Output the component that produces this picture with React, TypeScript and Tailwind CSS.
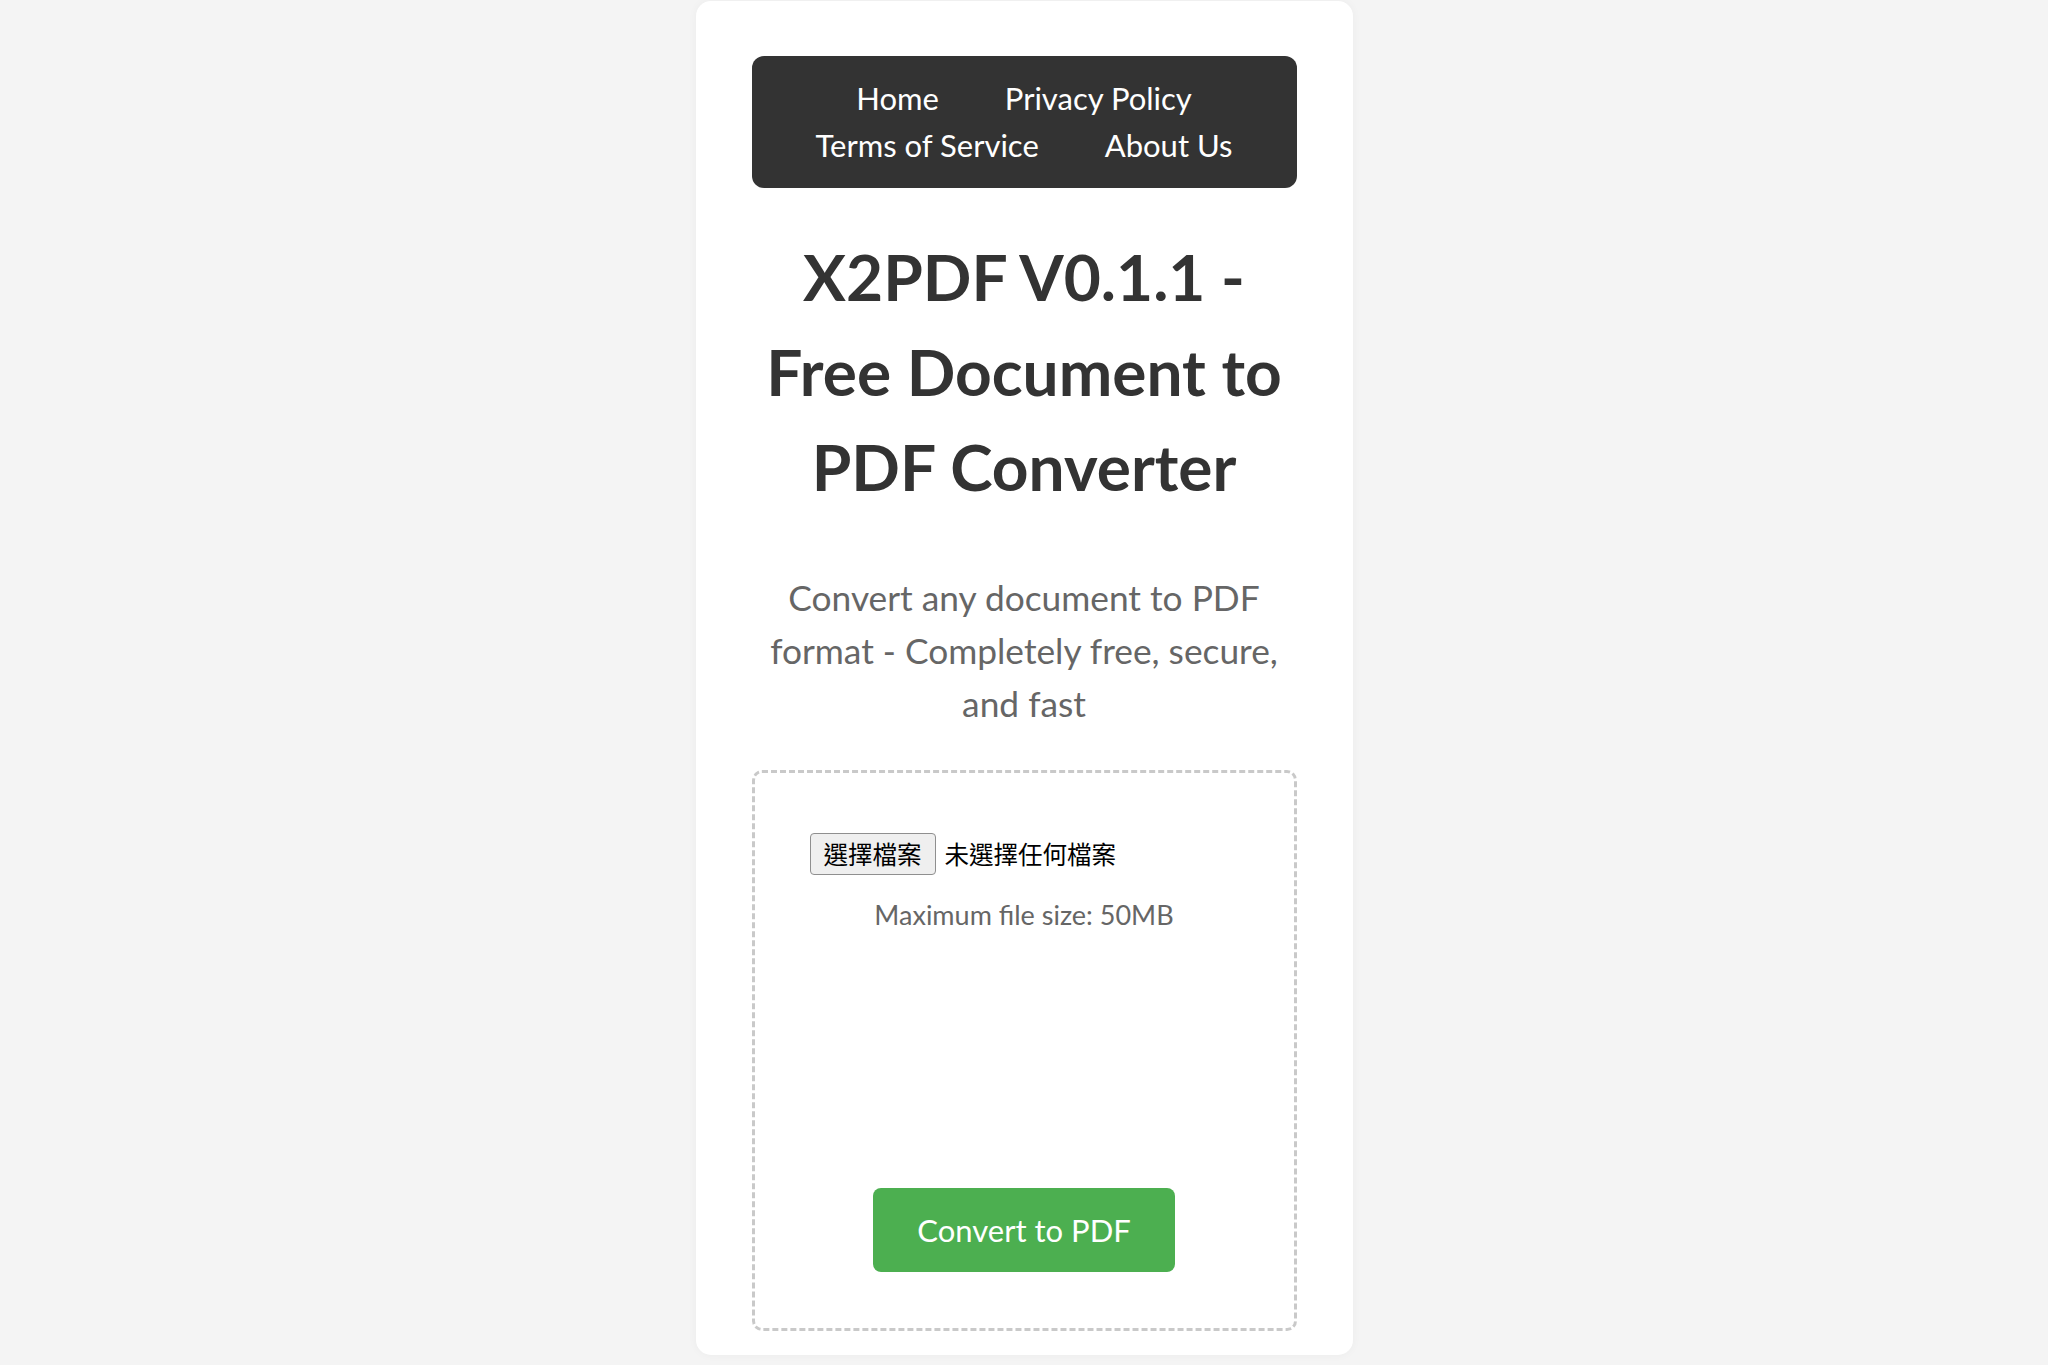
const links = ['Home', 'Privacy Policy', 'Terms of Service', 'About Us'];

function NavBar() {
  return (
    <nav className="bg-[#333] rounded-[12px] py-[19px] px-4 flex flex-wrap justify-center gap-x-[66px]">
      {links.map((l) => (
        <a key={l} href="#" className="text-white text-[31px] leading-[47px] no-underline">
          {l}
        </a>
      ))}
    </nav>
  );
}

function UploadBox() {
  return (
    <div className="border-[3px] border-dashed border-[#c9c9c9] rounded-[10px] px-[55px] pt-[60px] pb-[56px] flex flex-col items-center">
      {/* fake file input, left aligned like the browser's */}
      <div className="self-stretch flex items-center h-[42px] font-['Noto_Sans_CJK_TC',sans-serif] text-[24.5px] text-black">
        <span className="h-[42px] flex items-center px-[13px] bg-[#efefef] border border-[#8f8f8f] rounded-[4px] leading-none">
          選擇檔案
        </span>
        <span className="ml-[9px] leading-none">未選擇任何檔案</span>
      </div>
      <p className="mt-[21px] text-[27px] leading-[37px] text-[#666]">Maximum file size: 50MB</p>
      <button className="mt-[255px] h-[84px] px-[44px] bg-[#4caf50] text-white text-[31px] rounded-[8px]">
        Convert to PDF
      </button>
    </div>
  );
}

export default function App() {
  return (
    <div className="min-h-screen bg-[#f4f4f4] pt-px font-[Lato,'Noto_Sans_CJK_TC',sans-serif]">
      <div className="w-[657px] mx-auto bg-white rounded-[15px] shadow-[0_0_10px_rgba(0,0,0,0.04)] px-[56px] pt-[55px] pb-[24px]">
        <NavBar />
        <h1 className="mt-[41px] text-center text-[64px] leading-[95px] font-bold text-[#333]">
          X2PDF V0.1.1 - Free Document to PDF Converter
        </h1>
        <p className="mt-[57px] text-center text-[35.3px] leading-[53px] text-[#666]">
          Convert any document to PDF format - Completely free, secure, and fast
        </p>
        <div className="mt-[40px]">
          <UploadBox />
        </div>
      </div>
    </div>
  );
}
